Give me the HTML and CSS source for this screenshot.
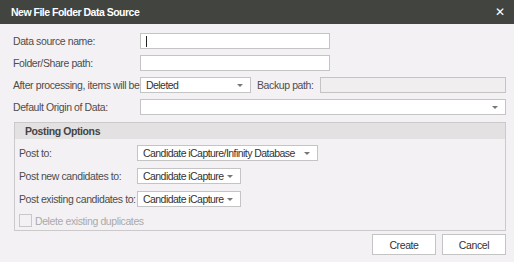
FILE: index.html
```html
<!DOCTYPE html>
<html lang="en">
<head>
    <meta charset="UTF-8">
    <title>New File Folder Data Source</title>
    <link rel="stylesheet" href="styles.css">
</head>
<body>
    <div class="dialog">
        <div class="titlebar">
            <span class="title">New File Folder Data Source</span>
            <span class="close">&#x2715;</span>
        </div>

        <div class="content">
            <div class="form">
                <label>Data source name:</label>
                <div class="input focused"><span class="caret"></span></div>

                <label>Folder/Share path:</label>
                <div class="input"></div>

                <label>After processing, items will be</label>
                <div class="row-split">
                    <div class="combo short">Deleted<span class="arrow"></span></div>
                    <label class="inline">Backup path:</label>
                    <div class="input disabled grow"></div>
                </div>

                <label>Default Origin of Data:</label>
                <div class="combo wide"><span class="arrow"></span></div>
            </div>

            <div class="group">
                <div class="group-header">Posting Options</div>
                <div class="group-body">
                    <label>Post to:</label>
                    <div class="combo post">Candidate iCapture/Infinity Database<span class="arrow"></span></div>

                    <label>Post new candidates to:</label>
                    <div class="combo small">Candidate iCapture<span class="arrow"></span></div>

                    <label>Post existing candidates to:</label>
                    <div class="combo small">Candidate iCapture<span class="arrow"></span></div>

                    <div class="check-row">
                        <span class="checkbox"></span>
                        <span>Delete existing duplicates</span>
                    </div>
                </div>
            </div>

            <div class="buttons">
                <button class="btn">Create</button>
                <button class="btn">Cancel</button>
            </div>
        </div>
    </div>
</body>
</html>
```

FILE: styles.css
```css
* {
    box-sizing: border-box;
}
body {
    margin: 0;
    background: #f4f1f4;
    font-family: 'Liberation Sans', Arial, sans-serif;
    font-size: 10.5px;
    letter-spacing: -0.4px;
    color: #4d4d4d;
    white-space: nowrap;
}
.dialog {
    width: 514px;
    height: 262px;
    display: flex;
    flex-direction: column;
    background: #f4f1f4;
}
.titlebar {
    height: 24px;
    background: #42443f;
    display: flex;
    align-items: center;
    justify-content: space-between;
    padding: 0 11px;
    color: #ffffff;
}
.title {
    font-weight: bold;
    font-size: 10.5px;
    letter-spacing: -0.5px;
}
.close {
    font-size: 12px;
    margin-right: -2px;
}
.content {
    padding: 9px 8px 0 13px;
}
.form {
    display: grid;
    grid-template-columns: 127px 1fr;
    row-gap: 6px;
    align-items: center;
}
.form > .input {
    width: 190px;
}
.input, .combo {
    height: 16px;
    border: 1px solid #c4c4c4;
    background: #ffffff;
}
.input.focused {
    display: flex;
    align-items: center;
    padding-left: 5px;
}
.caret {
    width: 1px;
    height: 11px;
    background: #222;
}
.input.disabled {
    background: #f1eeef;
}
.row-split {
    display: flex;
    align-items: center;
}
.grow {
    flex: 1;
}
label.inline {
    margin: 0 6px 0 6px;
}
.combo {
    display: flex;
    align-items: center;
    padding-left: 5px;
    position: relative;
    color: #333;
    letter-spacing: -0.55px;
}
.arrow {
    position: absolute;
    right: 7px;
    top: 6px;
    width: 0;
    height: 0;
    border-left: 3px solid transparent;
    border-right: 3px solid transparent;
    border-top: 3px solid #777;
}
.combo.short {
    width: 111px;
}
.group {
    margin: 7px 0 0 1px;
    border: 1px solid #cbc9ca;
    height: 109px;
}
.group-header {
    height: 16px;
    background: #e3e1e2;
    font-weight: bold;
    padding-left: 10px;
    display: flex;
    align-items: center;
    color: #444;
}
.group-body {
    padding: 6px 0 0 4px;
    display: grid;
    grid-template-columns: 118px auto;
    justify-content: start;
    row-gap: 7px;
    align-items: center;
}
.combo.post {
    width: 181px;
}
.combo.small {
    width: 104px;
}
.check-row {
    grid-column: 1 / 3;
    display: flex;
    align-items: center;
    gap: 3px;
    color: #aaa;
}
.checkbox {
    width: 13px;
    height: 13px;
    border: 1px solid #c8c8c8;
}
.buttons {
    display: flex;
    justify-content: flex-end;
    gap: 6px;
    margin-top: 3px;
}
.btn {
    width: 64px;
    height: 21px;
    border: 1px solid #c4c4c4;
    background: #ffffff;
    font-family: 'Liberation Sans', Arial, sans-serif;
    font-size: 10.5px;
    letter-spacing: -0.4px;
    color: #333;
    padding: 0;
}
```
